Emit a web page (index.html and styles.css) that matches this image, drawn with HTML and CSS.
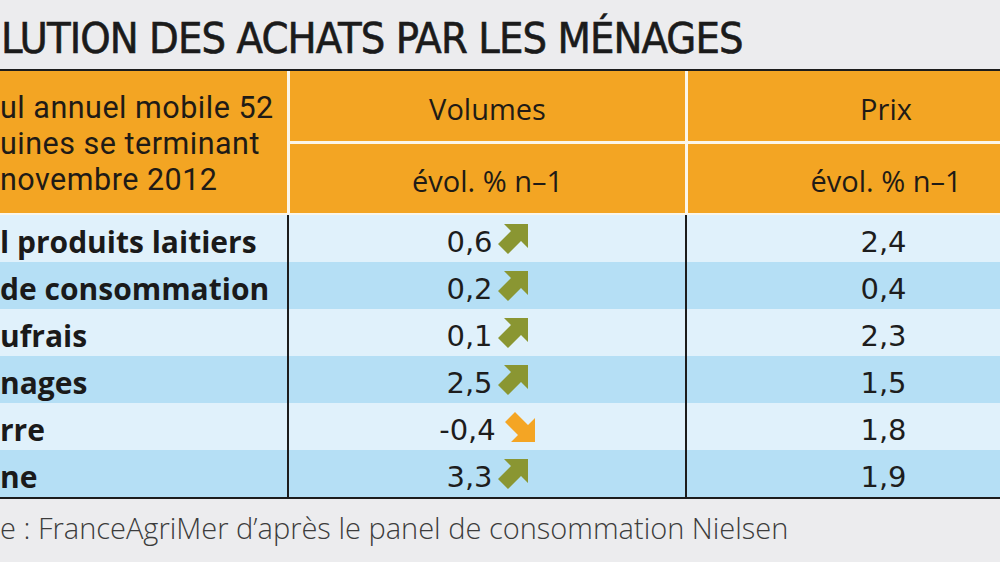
FILE: index.html
```html
<!DOCTYPE html>
<html lang="fr">
<head>
<meta charset="utf-8">
<title>Évolution des achats par les ménages</title>
<link rel="stylesheet" href="styles.css">
</head>
<body>
<div class="sheet">
  <h1 class="title">LUTION DES ACHATS PAR LES MÉNAGES</h1>
  <div class="table">
    <div class="head">
      <div class="hcell period">
        <span class="pline">ul annuel mobile 52</span>
        <span class="pline">uines se terminant</span>
        <span class="pline">novembre 2012</span>
      </div>
      <div class="hcell">Volumes</div>
      <div class="hcell last">Prix</div>
      <div class="hcell">évol. % n–1</div>
      <div class="hcell last">évol. % n–1</div>
    </div>
    <div class="row light">
      <div class="cell label">l produits laitiers</div>
      <div class="cell val">0,6<svg class="arrow up" viewBox="0 0 30 30"><path d="M6 0H30V24L23 17L10 30L0 20L13 7Z"/></svg></div>
      <div class="cell val last">2,4</div>
    </div>
    <div class="row dark">
      <div class="cell label">de consommation</div>
      <div class="cell val">0,2<svg class="arrow up" viewBox="0 0 30 30"><path d="M6 0H30V24L23 17L10 30L0 20L13 7Z"/></svg></div>
      <div class="cell val last">0,4</div>
    </div>
    <div class="row light">
      <div class="cell label">ufrais</div>
      <div class="cell val">0,1<svg class="arrow up" viewBox="0 0 30 30"><path d="M6 0H30V24L23 17L10 30L0 20L13 7Z"/></svg></div>
      <div class="cell val last">2,3</div>
    </div>
    <div class="row dark">
      <div class="cell label">nages</div>
      <div class="cell val">2,5<svg class="arrow up" viewBox="0 0 30 30"><path d="M6 0H30V24L23 17L10 30L0 20L13 7Z"/></svg></div>
      <div class="cell val last">1,5</div>
    </div>
    <div class="row light">
      <div class="cell label">rre</div>
      <div class="cell val">-0,4<svg class="arrow down" viewBox="0 0 30 30"><path d="M6 30H30V6L23 13L10 0L0 10L13 23Z"/></svg></div>
      <div class="cell val last">1,8</div>
    </div>
    <div class="row dark">
      <div class="cell label">ne</div>
      <div class="cell val">3,3<svg class="arrow up" viewBox="0 0 30 30"><path d="M6 0H30V24L23 17L10 30L0 20L13 7Z"/></svg></div>
      <div class="cell val last">1,9</div>
    </div>
  </div>
  <p class="source">e : FranceAgriMer d’après le panel de consommation Nielsen</p>
</div>
</body>
</html>
```

FILE: styles.css
```css
html, body {
  margin: 0;
  padding: 0;
}

body {
  width: 1000px;
  height: 562px;
  overflow: hidden;
  background: #ececee;
  color: #1e1e1e;
  font-family: "Open Sans", "DejaVu Sans", sans-serif;
}

.sheet {
  width: 1000px;
}

.title {
  margin: 0;
  height: 69px;
  box-sizing: border-box;
  padding: 17px 0 0 1px;
  font-family: "DejaVu Sans Condensed", "DejaVu Sans", sans-serif;
  font-weight: 400;
  font-size: 43px;
  line-height: 1;
  letter-spacing: -0.9px;
  -webkit-text-stroke: 0.6px #1b1b1b;
  white-space: nowrap;
  color: #1b1b1b;
}

.table {
  border-top: 2px solid #1c1c1c;
  border-bottom: 2px solid #1c1c1c;
}

.head {
  display: grid;
  grid-template-columns: 287px 395px 1fr;
  grid-template-rows: 70px 69px;
  gap: 3px;
  background: #fbf6ea;
  padding-bottom: 2px;
}

.hcell {
  background: #f3a523;
  display: flex;
  align-items: center;
  justify-content: center;
  font-size: 29px;
  color: #1f1b16;
  padding-top: 4px;
  box-sizing: border-box;
}

.hcell.last {
  padding-left: 84px;
}

.period {
  grid-row: span 2;
  flex-direction: column;
  align-items: flex-start;
  justify-content: center;
  font-family: "Roboto", "Liberation Sans", sans-serif;
  font-size: 30.5px;
  letter-spacing: 0.5px;
  line-height: 36px;
  white-space: nowrap;
}

.pline {
  display: block;
  height: 36px;
}

.row {
  display: grid;
  grid-template-columns: 289px 398px 1fr;
  height: 47px;
}

.row.light {
  background: #e0f1fb;
}

.row.dark {
  background: #b5dff5;
}

.cell {
  display: flex;
  align-items: center;
  padding-top: 6px;
  box-sizing: border-box;
  white-space: nowrap;
}

.cell:nth-child(1),
.cell:nth-child(2) {
  border-right: 2px solid #1c1c1c;
}

.label {
  font-weight: 700;
  font-size: 30px;
  color: #1a1a1a;
}

.val {
  justify-content: center;
  gap: 5px;
  font-family: "DejaVu Sans", sans-serif;
  font-size: 29px;
  color: #1d1d1d;
}

.val.last {
  padding-left: 80px;
}

.arrow {
  width: 30px;
  height: 30px;
  flex: none;
  margin-top: -5px;
}

.arrow.up {
  fill: #8a9632;
}

.arrow.down {
  fill: #f4a524;
  margin-left: 4px;
}

.source {
  margin: 9px 0 0;
  font-family: "Open Sans", "Lato", sans-serif;
  font-weight: 300;
  font-size: 29px;
  color: #3c3c3c;
  white-space: nowrap;
}
```
